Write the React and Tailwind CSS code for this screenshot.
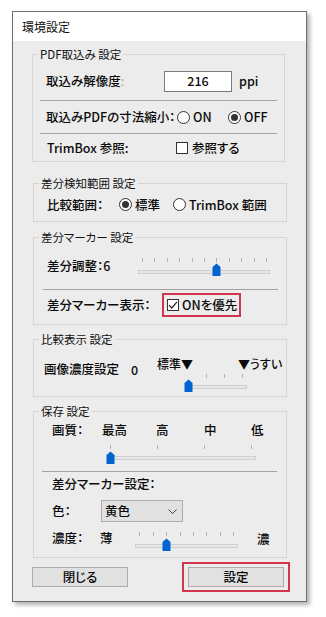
const TEXT = "text-[12.5px] leading-[18px] text-[#0a0a0a] font-medium";

function Slider({ w, ticks, track, thumb }) {
    const [tx, ty] = thumb;
    return (
        <svg width={w} height={19} className="block shrink-0">
            {ticks.map((x, i) => (
                <rect key={i} x={Math.round(x)} y={0} width={1} height={4} fill="#b2b2b2" />
            ))}
            <rect x={track[0] + 0.5} y={track[2] + 0.5} width={track[1] - track[0] - 1} height={3} fill="#e7e7e7" stroke="#cfcfcf" />
            <path d={`M${tx + 0.5} ${ty + 13} V${ty + 4} L${tx + 4.5} ${ty + 0.5} L${tx + 8.5} ${ty + 4} V${ty + 13} Z`} fill="#0063cf" />
        </svg>
    );
}

function Radio({ checked }) {
    return (
        <span className="w-[13px] h-[13px] rounded-full border border-[#333] bg-white flex items-center justify-center shrink-0">
            {checked && <span className="w-[7px] h-[7px] rounded-full bg-[#333]" />}
        </span>
    );
}

function Checkbox({ checked }) {
    return (
        <span className="w-[12px] h-[12px] border border-[#333] bg-white flex items-center justify-center shrink-0">
            {checked && (
                <svg width="10" height="10" viewBox="0 0 10 10">
                    <path d="M1 5.2 L3.8 8 L9 1.8" fill="none" stroke="#222" strokeWidth="1.2" />
                </svg>
            )}
        </span>
    );
}

function Group({ title, className, children }) {
    return (
        <fieldset className={`border border-[#d5d5d5] ${className}`}>
            <legend className="ml-[5px] px-[2px] text-[11.5px] leading-[16px] text-[#111]">{title}</legend>
            {children}
        </fieldset>
    );
}

export default function App() {
    return (
        <div className="w-[326px] h-[617px] bg-white pt-[11px] pl-[12px] font-['Noto_Sans_CJK_JP','Noto_Sans',sans-serif] [font-feature-settings:'palt']">
            <div className="w-[295px] h-[591px] border border-[#6d6d6d] shadow-[3px_3px_4px_rgba(0,0,0,0.3)] flex flex-col">
                {/* Title bar */}
                <div className="h-[29px] bg-white flex items-center pl-[9px] text-[12px] text-[#111]">環境設定</div>

                <div className="flex-1 bg-[#ececec] flex flex-col">

                    {/* PDF取込み */}
                    <Group title="PDF取込み 設定" className="mt-[5px] ml-[19px] w-[253px]">
                        <div className={`h-[38px] flex items-center pl-[13px] ${TEXT}`}>
                            <span className="w-[118px]">取込み解像度<span className="text-[#c9b48f]">:</span></span>
                            <div className="w-[68px] h-[21px] border border-[#7a7a7a] bg-white flex items-center justify-center">216</div>
                            <span className="ml-[7px]">ppi</span>
                        </div>
                        <div className="h-px bg-[#a3a3a3] mx-[7px]" />
                        <div className={`h-[32px] flex items-center pl-[13px] ${TEXT}`}>
                            <span className="w-[131px]">取込みPDFの寸法縮小：</span>
                            <span className="w-[51px] flex items-center">
                                <Radio />
                                <span className="ml-[3px]">ON</span>
                            </span>
                            <span className="flex items-center">
                                <Radio checked />
                                <span className="ml-[3px]">OFF</span>
                            </span>
                        </div>
                        <div className="h-px bg-[#a3a3a3] mx-[7px]" />
                        <div className={`h-[27px] flex items-center pl-[14px] ${TEXT}`}>
                            <span className="w-[129px]">TrimBox 参照:</span>
                            <Checkbox />
                            <span className="ml-[4px]">参照する</span>
                        </div>
                    </Group>

                    {/* 差分検知範囲 */}
                    <Group title="差分検知範囲 設定" className="mt-[13px] ml-[20px] w-[254px]">
                        <div className={`h-[27px] mb-[3px] flex items-center pl-[13px] ${TEXT}`}>
                            <span className="w-[72px]">比較範囲：</span>
                            <span className="w-[54px] flex items-center">
                                <Radio checked />
                                <span className="ml-[3px]">標準</span>
                            </span>
                            <span className="flex items-center">
                                <Radio />
                                <span className="ml-[3px]">TrimBox 範囲</span>
                            </span>
                        </div>
                    </Group>

                    {/* 差分マーカー */}
                    <Group title="差分マーカー 設定" className="mt-[7px] ml-[20px] w-[254px]">
                        <div className={`h-[44px] flex items-start pl-[13px] ${TEXT}`}>
                            <span className="w-[91px] mt-[12px]">差分調整：6</span>
                            <div className="mt-[13px]">
                                <Slider
                                    w={132}
                                    ticks={Array.from({ length: 11 }, (_, i) => 4 + i * 12.4)}
                                    track={[0, 132, 12]}
                                    thumb={[74, 5]}
                                />
                            </div>
                        </div>
                        <div className="h-px bg-[#a3a3a3] ml-[9px] mr-[8px]" />
                        <div className={`h-[34px] flex items-start pt-[3px] pl-[13px] ${TEXT}`}>
                            <span className="w-[115px] leading-[24px]">差分マーカー表示：</span>
                            <div className="w-[79px] h-[24px] border-2 border-[#d2354f] flex items-center pl-[3px]">
                                <Checkbox checked />
                                <span className="ml-[3px]">ONを優先</span>
                            </div>
                        </div>
                    </Group>

                    {/* 比較表示 */}
                    <Group title="比較表示 設定" className="mt-[6px] ml-[20px] w-[254px]">
                        <div className={`h-[49px] flex items-start pl-[10px] ${TEXT}`}>
                            <span className="w-[87px] mt-[13px]">画像濃度設定</span>
                            <span className="w-[26px] mt-[14px]">0</span>
                            <div className="flex flex-col mt-[8px]">
                                <div className="flex text-[12px] leading-[18px]">
                                    <span className="w-[81px]">標準▼</span>
                                    <span>▼うすい</span>
                                </div>
                                <div className="ml-[27px] mt-[1px]">
                                    <Slider w={64} ticks={[22, 40, 58]} track={[1, 63, 11]} thumb={[0, 5]} />
                                </div>
                            </div>
                        </div>
                    </Group>

                    {/* 保存 */}
                    <Group title="保存 設定" className="mt-[6px] ml-[20px] w-[254px]">
                        <div className={`flex mt-[2px] pl-[18px] ${TEXT}`}>
                            <span className="w-[50px]">画質：</span>
                            <span className="w-[54px]">最高</span>
                            <span className="w-[48px]">高</span>
                            <span className="w-[47px]">中</span>
                            <span>低</span>
                        </div>
                        <div className="ml-[71px] mt-[6px]">
                            <Slider w={153} ticks={[5, 52, 99, 146]} track={[5, 151, 11]} thumb={[1, 6]} />
                        </div>
                        <div className="h-px bg-[#a3a3a3] mt-[7px] ml-[8px] mr-[9px]" />
                        <div className={`mt-[3px] pl-[18px] ${TEXT}`}>差分マーカー設定：</div>
                        <div className={`mt-[7px] h-[22px] flex items-center pl-[18px] ${TEXT}`}>
                            <span className="w-[49px]">色：</span>
                            <div className="w-[82px] h-[22px] border border-[#adadad] bg-[#e1e1e1] flex items-center justify-between pl-[3px] pr-[5px]">
                                <span>黄色</span>
                                <svg width="9" height="5" viewBox="0 0 9 5">
                                    <path d="M0.5 0.5 L4.5 4.5 L8.5 0.5" fill="none" stroke="#444" strokeWidth="1" />
                                </svg>
                            </div>
                        </div>
                        <div className={`mt-[7px] mb-[6px] flex items-start pl-[18px] ${TEXT}`}>
                            <span className="w-[48px]">濃度：</span>
                            <span className="w-[34px]">薄</span>
                            <div className="mt-[3px]">
                                <Slider
                                    w={106}
                                    ticks={Array.from({ length: 8 }, (_, i) => 5.3 + i * 13.4)}
                                    track={[1, 104, 12]}
                                    thumb={[28, 6]}
                                />
                            </div>
                            <span className="ml-[17px] mt-[1px]">濃</span>
                        </div>
                    </Group>

                    {/* Buttons */}
                    <div className={`flex items-center mt-[4px] ml-[19px] ${TEXT}`}>
                        <button className="w-[96px] h-[20px] border border-[#adadad] bg-[#e1e1e1] flex items-center justify-center">閉じる</button>
                        <div className="ml-[54px] w-[108px] h-[30px] border-2 border-[#d2354f] flex items-center justify-center">
                            <button className="w-[96px] h-[20px] border border-[#adadad] bg-[#e1e1e1] flex items-center justify-center">設定</button>
                        </div>
                    </div>
                </div>
            </div>
        </div>
    );
}
